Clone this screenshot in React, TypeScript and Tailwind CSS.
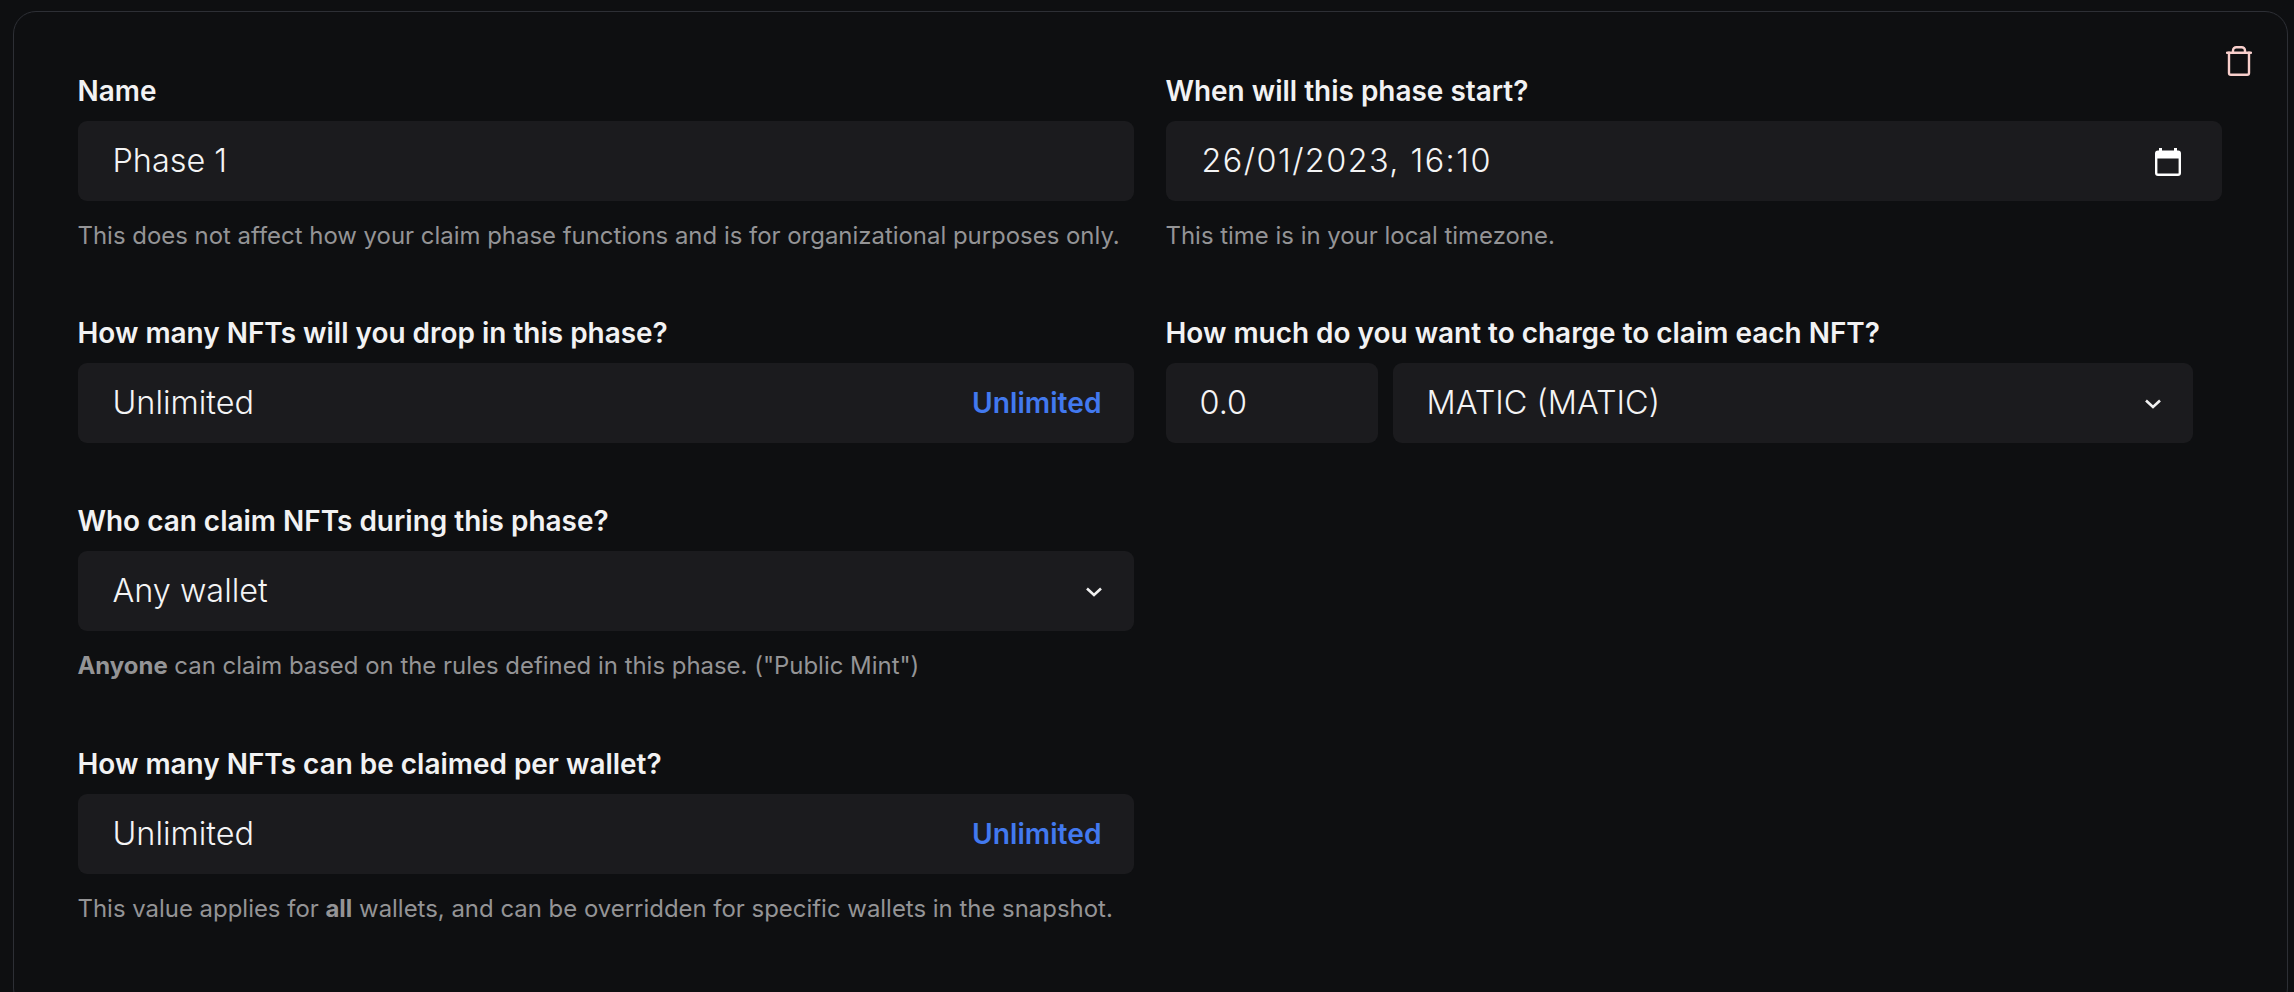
const font = { fontFamily: 'Inter, sans-serif' };

function Label({ children }: { children: React.ReactNode }) {
  return <div className="mb-[15px] h-[30px] text-[27.95px] leading-[30px] font-semibold text-[#f2f2f3]">{children}</div>;
}

function Help({ children }: { children: React.ReactNode }) {
  return <p className="mt-[20px] h-[29px] text-[23.93px] leading-[29px] text-[#949496]">{children}</p>;
}

function Box({ children, className = '' }: { children: React.ReactNode; className?: string }) {
  return (
    <div className={`flex h-[80px] items-center justify-between rounded-[9px] bg-[#1b1b1e] pt-[2px] text-[#f4f4f5] text-[32.4px] font-light ${className}`}>
      {children}
    </div>
  );
}

function Chevron() {
  return (
    <svg width="16" height="10" viewBox="0 0 16 10" fill="none" stroke="#f0f0f0" strokeWidth="2.6">
      <path d="M1 1.5 L8 8 L15 1.5" />
    </svg>
  );
}

function TrashIcon() {
  return (
    <svg width="26" height="30" viewBox="0 0 26 30" fill="none" stroke="#f8cfcc" strokeWidth="2.4" strokeLinecap="round" strokeLinejoin="round">
      <path d="M1 6.8 H25" />
      <path d="M3 6.8 V27 a1.8 1.8 0 0 0 1.8 1.8 H21.2 a1.8 1.8 0 0 0 1.8 -1.8 V6.8" />
      <path d="M7 6.8 V4.5 a3.3 3.3 0 0 1 3.3 -3.3 H15.7 a3.3 3.3 0 0 1 3.3 3.3 V6.8" />
    </svg>
  );
}

function CalendarIcon() {
  return (
    <svg width="26" height="28" viewBox="0 0 26 28">
      <path d="M4 0 h3 v2.5 h12 v-2.5 h3 v2.5 h1 a3 3 0 0 1 3 3 v19.5 a3 3 0 0 1 -3 3 h-20 a3 3 0 0 1 -3 -3 v-19.5 a3 3 0 0 1 3 -3 h1 z M2.4 10.5 v14.5 a0.6 0.6 0 0 0 0.6 0.6 h20 a0.6 0.6 0 0 0 0.6 -0.6 v-14.5 z" fill="#ffffff" fillRule="evenodd" />
    </svg>
  );
}

export default function App() {
  return (
    <div className="h-[992px] overflow-hidden bg-[#0e0f11] pt-[11px] pl-[13px] pr-[6.5px]" style={font}>
      <div className="relative h-[1000px] rounded-[23px] border-[1.5px] border-[#2d2f35] pl-[63.5px] pt-[63.5px]">
        {/* delete phase */}
        <button className="absolute top-[33.5px] right-[35px]">
          <TrashIcon />
        </button>

        <div className="grid w-[2144px] grid-cols-[1056px_1056px] gap-x-[32px]">
          {/* Row 1 */}
          <div className="mb-[68px]">
            <Label>Name</Label>
            <Box className="px-[35px]">Phase 1</Box>
            <Help>This does not affect how your claim phase functions and is for organizational purposes only.</Help>
          </div>
          <div>
            <Label>When will this phase start?</Label>
            <Box className="pl-[36px] pr-[41px]">
              <span className="tracking-[1.45px]">26/01/2023, 16:10</span>
              <CalendarIcon />
            </Box>
            <Help>This time is in your local timezone.</Help>
          </div>

          {/* Row 2 */}
          <div className="mb-[63px]">
            <Label>How many NFTs will you drop in this phase?</Label>
            <Box className="pl-[35px] pr-[32px]">
              <span>Unlimited</span>
              <span className="text-[28.2px] font-semibold text-[#4279ef]">Unlimited</span>
            </Box>
          </div>
          <div>
            <Label>How much do you want to charge to claim each NFT?</Label>
            <div className="flex gap-[15px]">
              <Box className="w-[212px] pl-[34px]">0.0</Box>
              <Box className="w-[800px] pl-[34px] pr-[32px]">
                <span>MATIC (MATIC)</span>
                <Chevron />
              </Box>
            </div>
          </div>

          {/* Row 3 */}
          <div className="col-start-1 mb-[69px]">
            <Label>Who can claim NFTs during this phase?</Label>
            <Box className="pl-[35px] pr-[32px]">
              <span>Any wallet</span>
              <Chevron />
            </Box>
            <Help>
              <b className="font-bold">Anyone</b> can claim based on the rules defined in this phase. ("Public Mint")
            </Help>
          </div>

          {/* Row 4 */}
          <div className="col-start-1">
            <Label>How many NFTs can be claimed per wallet?</Label>
            <Box className="pl-[35px] pr-[32px]">
              <span>Unlimited</span>
              <span className="text-[28.2px] font-semibold text-[#4279ef]">Unlimited</span>
            </Box>
            <Help>
              This value applies for <b className="font-bold">all</b> wallets, and can be overridden for specific wallets in the snapshot.
            </Help>
          </div>
        </div>
      </div>
    </div>
  );
}
